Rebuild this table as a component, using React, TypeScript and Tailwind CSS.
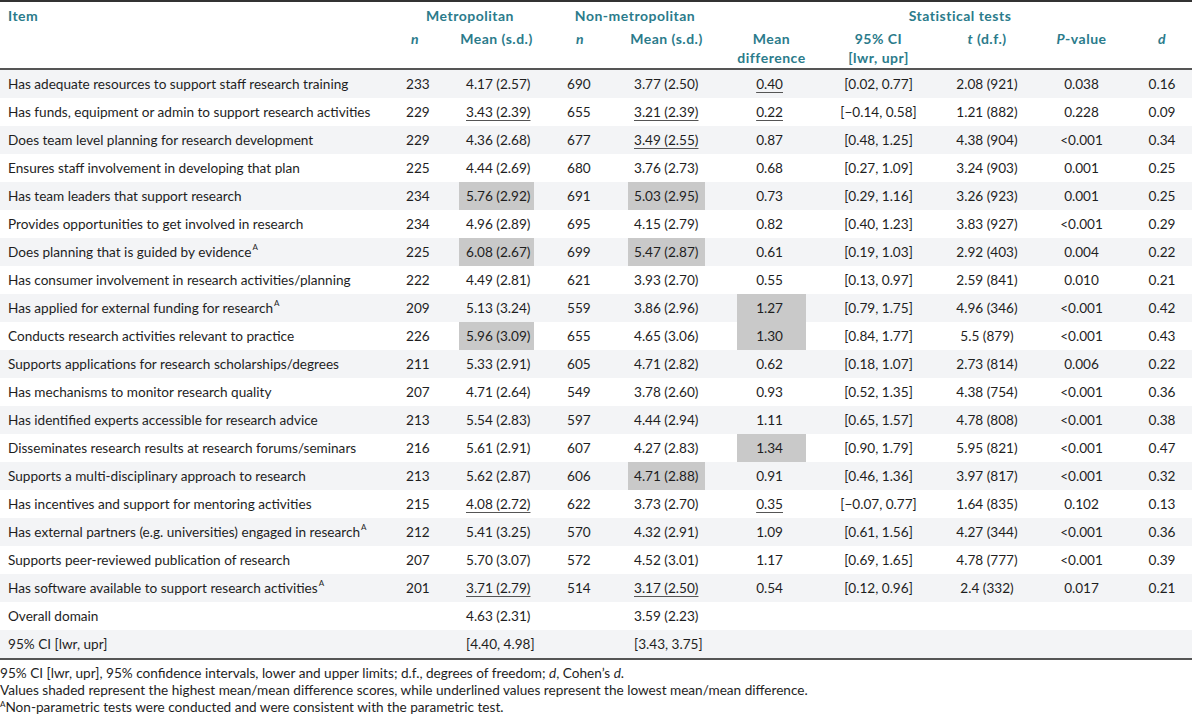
import React from "react";

type Row = {
  item: string;
  sup?: boolean;
  n1?: string;
  m1: string;
  m1s?: "s" | "u";
  n2?: string;
  m2: string;
  m2s?: "s" | "u";
  diff?: string;
  diffs?: "s" | "u";
  ci?: string;
  t?: string;
  p?: string;
  d?: string;
};

const rows: Row[] = [
  { item: "Has adequate resources to support staff research training", n1: "233", m1: "4.17 (2.57)", n2: "690", m2: "3.77 (2.50)", diff: "0.40", diffs: "u", ci: "[0.02, 0.77]", t: "2.08 (921)", p: "0.038", d: "0.16" },
  { item: "Has funds, equipment or admin to support research activities", n1: "229", m1: "3.43 (2.39)", m1s: "u", n2: "655", m2: "3.21 (2.39)", m2s: "u", diff: "0.22", diffs: "u", ci: "[−0.14, 0.58]", t: "1.21 (882)", p: "0.228", d: "0.09" },
  { item: "Does team level planning for research development", n1: "229", m1: "4.36 (2.68)", n2: "677", m2: "3.49 (2.55)", m2s: "u", diff: "0.87", ci: "[0.48, 1.25]", t: "4.38 (904)", p: "<0.001", d: "0.34" },
  { item: "Ensures staff involvement in developing that plan", n1: "225", m1: "4.44 (2.69)", n2: "680", m2: "3.76 (2.73)", diff: "0.68", ci: "[0.27, 1.09]", t: "3.24 (903)", p: "0.001", d: "0.25" },
  { item: "Has team leaders that support research", n1: "234", m1: "5.76 (2.92)", m1s: "s", n2: "691", m2: "5.03 (2.95)", m2s: "s", diff: "0.73", ci: "[0.29, 1.16]", t: "3.26 (923)", p: "0.001", d: "0.25" },
  { item: "Provides opportunities to get involved in research", n1: "234", m1: "4.96 (2.89)", n2: "695", m2: "4.15 (2.79)", diff: "0.82", ci: "[0.40, 1.23]", t: "3.83 (927)", p: "<0.001", d: "0.29" },
  { item: "Does planning that is guided by evidence", sup: true, n1: "225", m1: "6.08 (2.67)", m1s: "s", n2: "699", m2: "5.47 (2.87)", m2s: "s", diff: "0.61", ci: "[0.19, 1.03]", t: "2.92 (403)", p: "0.004", d: "0.22" },
  { item: "Has consumer involvement in research activities/planning", n1: "222", m1: "4.49 (2.81)", n2: "621", m2: "3.93 (2.70)", diff: "0.55", ci: "[0.13, 0.97]", t: "2.59 (841)", p: "0.010", d: "0.21" },
  { item: "Has applied for external funding for research", sup: true, n1: "209", m1: "5.13 (3.24)", n2: "559", m2: "3.86 (2.96)", diff: "1.27", diffs: "s", ci: "[0.79, 1.75]", t: "4.96 (346)", p: "<0.001", d: "0.42" },
  { item: "Conducts research activities relevant to practice", n1: "226", m1: "5.96 (3.09)", m1s: "s", n2: "655", m2: "4.65 (3.06)", diff: "1.30", diffs: "s", ci: "[0.84, 1.77]", t: "5.5 (879)", p: "<0.001", d: "0.43" },
  { item: "Supports applications for research scholarships/degrees", n1: "211", m1: "5.33 (2.91)", n2: "605", m2: "4.71 (2.82)", diff: "0.62", ci: "[0.18, 1.07]", t: "2.73 (814)", p: "0.006", d: "0.22" },
  { item: "Has mechanisms to monitor research quality", n1: "207", m1: "4.71 (2.64)", n2: "549", m2: "3.78 (2.60)", diff: "0.93", ci: "[0.52, 1.35]", t: "4.38 (754)", p: "<0.001", d: "0.36" },
  { item: "Has identified experts accessible for research advice", n1: "213", m1: "5.54 (2.83)", n2: "597", m2: "4.44 (2.94)", diff: "1.11", ci: "[0.65, 1.57]", t: "4.78 (808)", p: "<0.001", d: "0.38" },
  { item: "Disseminates research results at research forums/seminars", n1: "216", m1: "5.61 (2.91)", n2: "607", m2: "4.27 (2.83)", diff: "1.34", diffs: "s", ci: "[0.90, 1.79]", t: "5.95 (821)", p: "<0.001", d: "0.47" },
  { item: "Supports a multi-disciplinary approach to research", n1: "213", m1: "5.62 (2.87)", n2: "606", m2: "4.71 (2.88)", m2s: "s", diff: "0.91", ci: "[0.46, 1.36]", t: "3.97 (817)", p: "<0.001", d: "0.32" },
  { item: "Has incentives and support for mentoring activities", n1: "215", m1: "4.08 (2.72)", m1s: "u", n2: "622", m2: "3.73 (2.70)", diff: "0.35", diffs: "u", ci: "[−0.07, 0.77]", t: "1.64 (835)", p: "0.102", d: "0.13" },
  { item: "Has external partners (e.g. universities) engaged in research", sup: true, n1: "212", m1: "5.41 (3.25)", n2: "570", m2: "4.32 (2.91)", diff: "1.09", ci: "[0.61, 1.56]", t: "4.27 (344)", p: "<0.001", d: "0.36" },
  { item: "Supports peer-reviewed publication of research", n1: "207", m1: "5.70 (3.07)", n2: "572", m2: "4.52 (3.01)", diff: "1.17", ci: "[0.69, 1.65]", t: "4.78 (777)", p: "<0.001", d: "0.39" },
  { item: "Has software available to support research activities", sup: true, n1: "201", m1: "3.71 (2.79)", m1s: "u", n2: "514", m2: "3.17 (2.50)", m2s: "u", diff: "0.54", ci: "[0.12, 0.96]", t: "2.4 (332)", p: "0.017", d: "0.21" },
  { item: "Overall domain", m1: "4.63 (2.31)", m2: "3.59 (2.23)" },
  { item: "95% CI [lwr, upr]", m1: "[4.40, 4.98]", m2: "[3.43, 3.75]" },
];

const Val = ({ v, mark }: { v?: string; mark?: "s" | "u" }) =>
  mark === "u" ? (
    <span className="underline decoration-1 underline-offset-[3px] decoration-[#555]">{v}</span>
  ) : (
    <span>{v}</span>
  );

export default function App() {
  return (
    <div
      className="w-[1192px] h-[716px] bg-white text-[#1e1e1e] text-[13.6px] overflow-hidden"
      style={{ fontFamily: "Lato, 'Open Sans', sans-serif" }}
    >
      {/* header */}
      <div className="border-t-2 border-[#333] border-b-2 border-b-[#555] h-[70px] font-bold text-[#2b7b8b] text-[14px] tracking-[0.5px]">
        <div className="flex h-[27px] items-center">
          <div className="w-[398px] pl-2">Item</div>
          <div className="w-[144px] text-center">Metropolitan</div>
          <div className="w-[186px] text-center">Non-metropolitan</div>
          <div className="w-[464px] text-center">Statistical tests</div>
        </div>
        <div className="flex leading-[19px]">
          <div className="w-[398px]" />
          <div className="w-[34px] text-center italic">n</div>
          <div className="ml-[27px] w-[75px] text-center whitespace-nowrap">Mean (s.d.)</div>
          <div className="ml-[26px] w-[40px] text-center italic">n</div>
          <div className="ml-[28px] w-[77px] text-center whitespace-nowrap">Mean (s.d.)</div>
          <div className="ml-[32px] w-[69px] text-center">
            Mean
            <br />
            difference
          </div>
          <div className="w-[145px] text-center">
            95% CI
            <br />
            [lwr, upr]
          </div>
          <div className="w-[72px] text-center">
            <span className="italic">t</span> (d.f.)
          </div>
          <div className="w-[117px] text-center">
            <span className="italic">P</span>-value
          </div>
          <div className="w-[44px] text-center italic">d</div>
        </div>
      </div>

      {/* body */}
      <div className="border-b-2 border-[#555]">
        {rows.map((r, i) => (
          <div key={i} className={`flex h-[28px] items-stretch ${i % 2 === 0 ? "bg-[#f3f4f6]" : "bg-white"}`}>
            <div className="w-[398px] pl-2 flex items-center">
              {r.item}
              {r.sup && <sup className="text-[8px] ml-[1px] -top-[0.6em]">A</sup>}
            </div>
            <div className="w-[34px] pl-[8px] flex items-center">{r.n1}</div>
            <div className={`ml-[27px] w-[75px] pl-[7px] flex items-center whitespace-nowrap ${r.m1s === "s" ? "bg-[#c9c9c9]" : ""}`}>
              <Val v={r.m1} mark={r.m1s} />
            </div>
            <div className="ml-[26px] w-[40px] pl-[7px] flex items-center">{r.n2}</div>
            <div className={`ml-[28px] w-[77px] pl-[6px] flex items-center whitespace-nowrap ${r.m2s === "s" ? "bg-[#c9c9c9]" : ""}`}>
              <Val v={r.m2} mark={r.m2s} />
            </div>
            <div className={`ml-[32px] w-[69px] pr-[23px] flex items-center justify-end ${r.diffs === "s" ? "bg-[#c9c9c9]" : ""}`}>
              <Val v={r.diff} mark={r.diffs} />
            </div>
            <div className="w-[145px] flex items-center justify-center">{r.ci}</div>
            <div className="w-[72px] flex items-center justify-center whitespace-nowrap">{r.t}</div>
            <div className="w-[117px] flex items-center justify-center">{r.p}</div>
            <div className="w-[44px] flex items-center justify-center">{r.d}</div>
          </div>
        ))}
      </div>

      {/* notes */}
      <div className="pt-[5px] leading-[17px]">
        <p>
          95% CI [lwr, upr], 95% confidence intervals, lower and upper limits; d.f., degrees of freedom; <span className="italic">d</span>, Cohen’s <span className="italic">d</span>.
        </p>
        <p>Values shaded represent the highest mean/mean difference scores, while underlined values represent the lowest mean/mean difference.</p>
        <p>
          <sup className="text-[8px] -top-[0.6em]">A</sup>Non-parametric tests were conducted and were consistent with the parametric test.
        </p>
      </div>
    </div>
  );
}
